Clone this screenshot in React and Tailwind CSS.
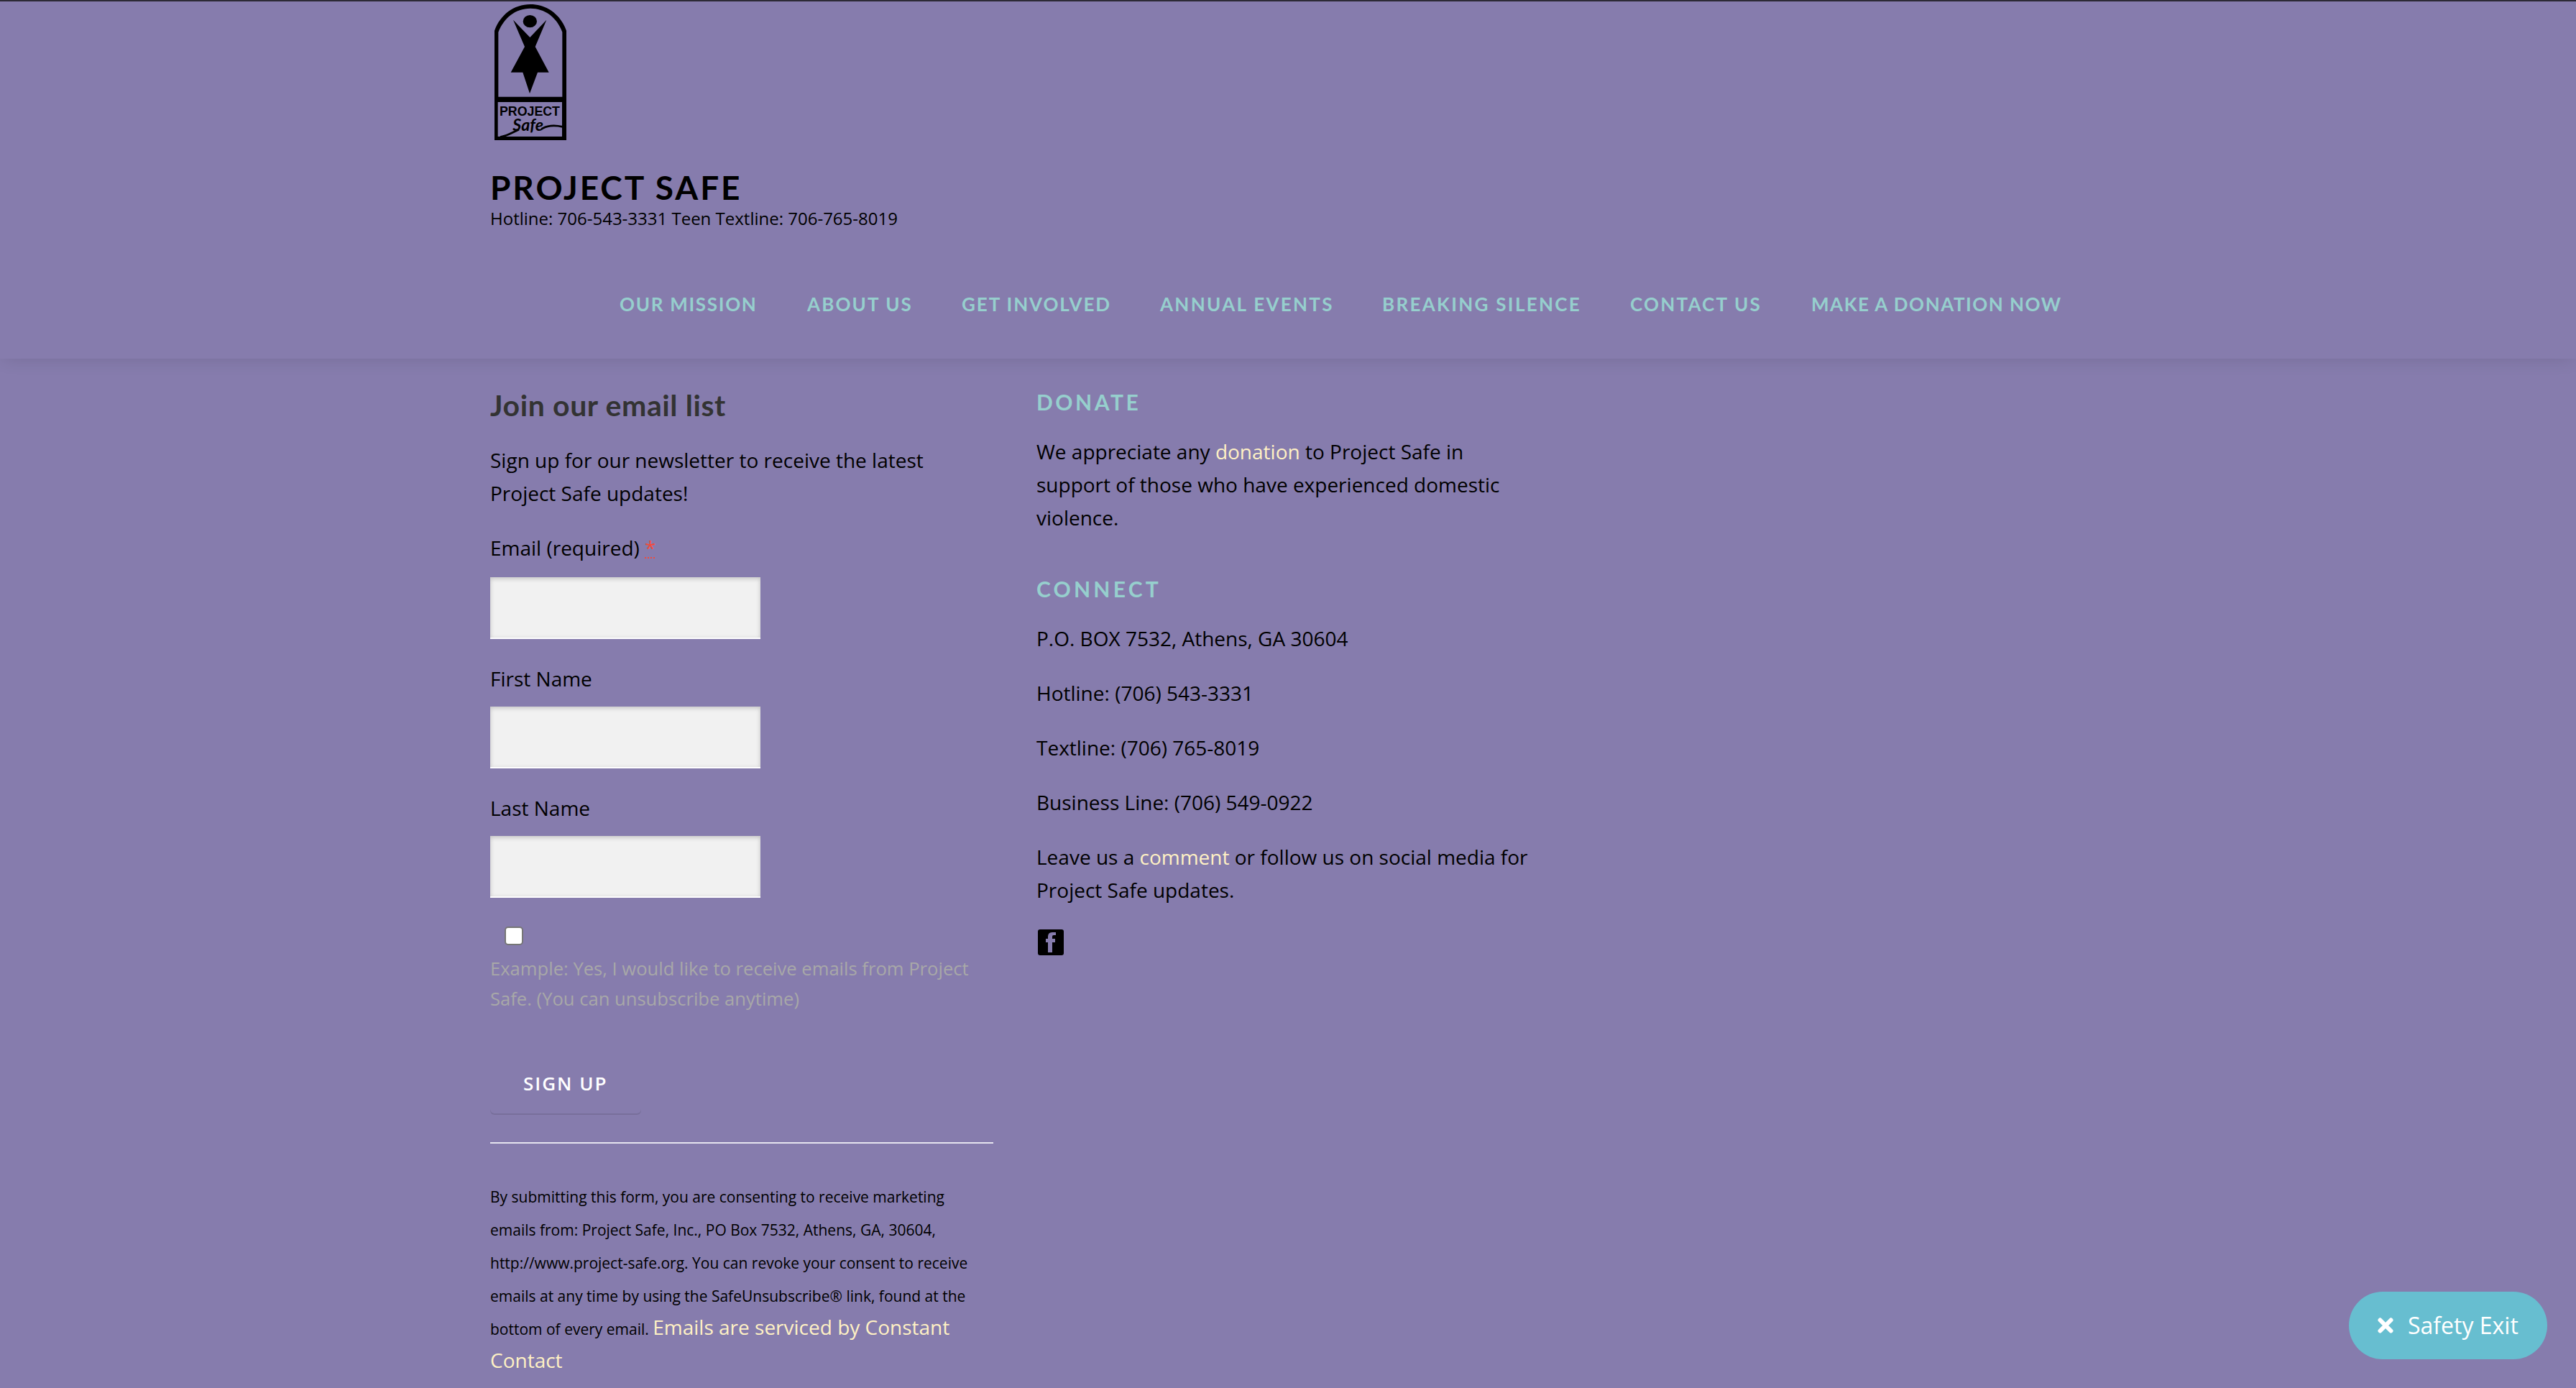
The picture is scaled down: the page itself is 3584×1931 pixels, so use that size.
const navItems = [
  ["OUR MISSION", "w-[261px] tracking-[1.7px]"],
  ["ABOUT US", "w-[215px] tracking-[2.1px]"],
  ["GET INVOLVED", "w-[276px] tracking-[1.9px]"],
  ["ANNUAL EVENTS", "w-[309px] tracking-[2.3px]"],
  ["BREAKING SILENCE", "w-[345px] tracking-[2.3px]"],
  ["CONTACT US", "w-[252px] tracking-[2.2px]"],
  ["MAKE A DONATION NOW", "w-[348px] tracking-[1.5px]"],
];

function Logo() {
  return (
    <svg className="block h-[189px] w-[100px]" viewBox="84 18 300 567" role="img" aria-label="Project Safe">
      <path
        fill="#000"
        fillRule="evenodd"
        d="M84 585V128C108 62 164 18 234 18S360 62 384 128V585ZM100 404H367V134C345 76 298 35 234 35S123 76 100 134ZM98 426V570H366V426Z"
      />
      <ellipse cx="232" cy="89" rx="29" ry="26" />
      <path d="M162 83L232 156L301 83L254 195L311 302H264L231 390L202 302H152L210 195Z" />
      <text x="105" y="483" fontSize="54" textLength="252" lengthAdjust="spacingAndGlyphs" className="font-['Liberation_Sans'] font-bold">PROJECT</text>
      <text x="160" y="545" fontSize="68" textLength="128" lengthAdjust="spacingAndGlyphs" className="font-['Lato'] font-bold italic">Safe</text>
      <path d="M108 572C140 566 160 552 186 541M280 538C306 522 338 522 368 529" fill="none" stroke="#000" strokeWidth="8" />
    </svg>
  );
}

function Field({ label, required }) {
  return (
    <label className={required ? "block h-[182px]" : "block h-[180px]"}>
      <span className="block leading-[46px]">
        {label}
        {required && (
          <>
            {" "}
            <abbr className="text-[#f04b3c] underline decoration-dotted decoration-2 underline-offset-[2px]">*</abbr>
          </>
        )}
      </span>
      <input className={(required ? "mt-[18px]" : "mt-[16px]") + " block h-[86px] w-[376px] border-b-2 border-white bg-[#f1f1f1] shadow-[inset_0_2px_6px_rgba(0,0,0,0.2)] outline-none"} />
    </label>
  );
}

const Link = ({ children }) => <a className="text-[#fff1c4]">{children}</a>;

export default function App() {
  return (
    <div className="h-[1931px] w-[3584px] overflow-hidden bg-[#867cad] font-['Open_Sans',sans-serif] text-[28px] leading-[46px] text-black">
      <header className="h-[499px] border-t-2 border-[#2d2a36] shadow-[0_4px_24px_-4px_rgba(0,0,0,0.12)]">
        <div className="mx-auto w-[2280px] px-[30px]">
          <div className="pl-[6px] pt-[4px]"><Logo /></div>
          <h1 className="mt-[38px] h-[55px] font-['Lato',sans-serif] text-[46px] font-bold leading-[56px] tracking-[2.9px]">PROJECT SAFE</h1>
          <p className="text-[24px] leading-[32px]">Hotline: 706-543-3331 Teen Textline: 706-765-8019</p>
        </div>
        <nav className="ml-[862px] mt-[80px] flex font-['Lato',sans-serif] text-[26px] font-bold leading-[46px] text-[#96cfcd]">
          {navItems.map(([name, sizing]) => (
            <a key={name} className={"block shrink-0 whitespace-nowrap " + sizing}>{name}</a>
          ))}
        </nav>
      </header>
      <main className="mx-auto flex w-[2280px] px-[30px]">
        <section className="w-[700px]">
          <h2 className="mt-[41px] font-['Lato',sans-serif] text-[41px] font-bold leading-[48px] tracking-[0.6px] text-[#333]">Join our email list</h2>
          <p className="mt-[29px]">Sign up for our newsletter to receive the latest<br />Project Safe updates!</p>
          <div className="mt-[30px]">
            <Field label="Email (required)" required />
            <Field label="First Name" />
            <Field label="Last Name" />
          </div>
          <input type="checkbox" className="ml-[20px] mt-[8px] block size-[26px] appearance-none rounded-[5px] border-2 border-[#767676] bg-white" />
          <p className="mt-[12px] text-[25.6px] leading-[42px] text-[#a8a8a8]">Example: Yes, I would like to receive emails from Project<br />Safe. (You can unsubscribe anytime)</p>
          <button className="mt-[60px] block h-[80px] w-[210px] rounded-[6px] pb-[8px] pl-[46px] text-left text-[26px] font-semibold tracking-[2px] text-white shadow-[inset_0_-2px_0_rgba(0,0,0,0.1)]">SIGN UP</button>
          <hr className="mt-[38px] border-t-2 border-[#e6e4ee]" />
          <p className="mt-[48px]">
            <span className="text-[21px] leading-none">By submitting this form, you are consenting to receive marketing<br />emails from: Project Safe, Inc., PO Box 7532, Athens, GA, 30604,<br />http://www.project-safe.org. You can revoke your consent to receive<br />emails at any time by using the SafeUnsubscribe® link, found at the<br />bottom of every email. </span>
            <Link>Emails are serviced by Constant<br />Contact</Link>
          </p>
        </section>
        <section className="ml-[60px] w-[700px]">
          <h3 className="mt-[40px] font-['Lato',sans-serif] text-[30px] font-bold leading-[40px] tracking-[3.5px] text-[#96cfcd]">DONATE</h3>
          <p className="mt-[26px]">We appreciate any <Link>donation</Link> to Project Safe in<br />support of those who have experienced domestic<br />violence.</p>
          <h3 className="mt-[56px] font-['Lato',sans-serif] text-[30px] font-bold leading-[40px] tracking-[4.2px] text-[#96cfcd]">CONNECT</h3>
          <div className="mt-[26px] space-y-[30px]">
            <p>P.O. BOX 7532, Athens, GA 30604</p>
            <p>Hotline: (706) 543-3331</p>
            <p>Textline: (706) 765-8019</p>
            <p>Business Line: (706) 549-0922</p>
            <p>Leave us a <Link>comment</Link> or follow us on social media for<br />Project Safe updates.</p>
          </div>
          <svg className="ml-[2px] mt-[32px] block size-[36px]" viewBox="0 0 36 36"><path fillRule="evenodd" d="M3 0H33Q36 0 36 3V33Q36 36 33 36H3Q0 36 0 33V3Q0 0 3 0ZM14 32H20V18H24V13H20V10Q20 8 22 8H25V4H20Q14 4 14 10V13H11V18H14Z" /></svg>
        </section>
      </main>
      <a className="fixed bottom-[40px] right-[40px] flex h-[94px] w-[276px] items-center rounded-full bg-[#67bed0] pl-[40px] text-[32px] text-white">
        <svg className="mr-[20px] size-[22px]" viewBox="0 0 22 22"><path d="M3.5 3.5L18.5 18.5M18.5 3.5L3.5 18.5" stroke="#fff" strokeWidth="6" strokeLinecap="round" /></svg>
        Safety Exit
      </a>
    </div>
  );
}
